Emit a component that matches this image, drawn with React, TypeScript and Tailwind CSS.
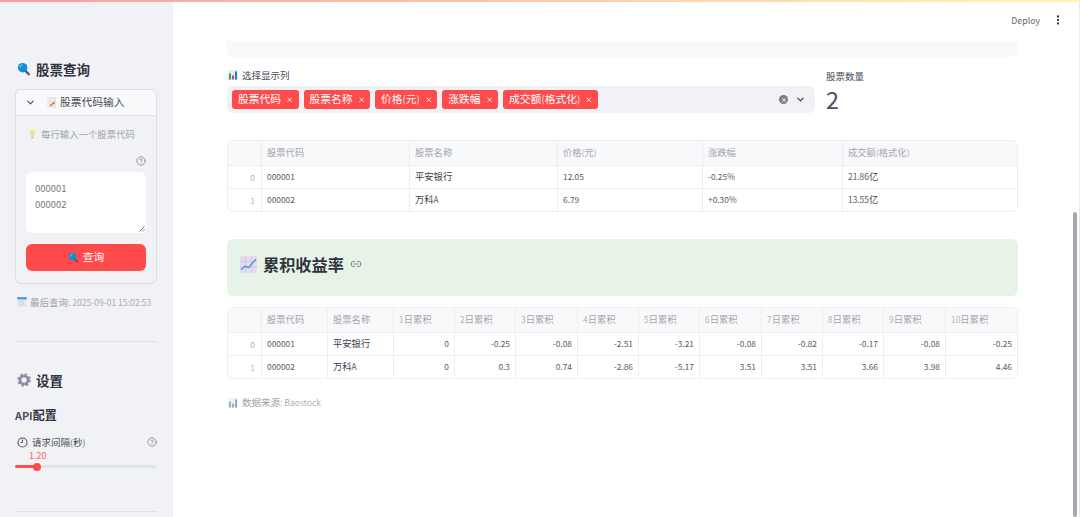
import { ChevronDown, CircleHelp, Ellipsis, Link2, X } from "lucide-react";

const font = "font-['Noto_Sans_CJK_SC','Noto_Sans',sans-serif]";

// latin runs sit a bit smaller than the CJK around them
function T({ children }: { children: string }) {
  return (
    <>
      {children.split(/([\x00-\x7F]+)/).map((part, i) =>
        i % 2 === 1 ? (
          <span key={i} className="whitespace-pre text-[0.9em] opacity-85">
            {part}
          </span>
        ) : (
          part
        )
      )}
    </>
  );
}

function Magnifier({ className }: { className: string }) {
  return (
    <svg viewBox="0 0 16 16" className={className}>
      <path d="M9.5 10l4 4" stroke="#5c4a8c" strokeWidth="2.6" strokeLinecap="round" />
      <circle cx="6.5" cy="6.5" r="5.4" fill="#0f8fd6" />
      <path d="M3.4 6a3.2 3.2 0 0 1 2.6-2.7" stroke="#7fd0f5" strokeWidth="1.2" fill="none" strokeLinecap="round" />
    </svg>
  );
}

function BarChart({ faded }: { faded?: boolean }) {
  return (
    <svg viewBox="0 0 10 10" className={`h-[10px] w-[10px] ${faded ? "opacity-60" : ""}`}>
      <rect width="10" height="10" rx="1" fill="#e6edf2" />
      <rect x="1" y="3.5" width="2" height="6" fill="#1fa971" />
      <rect x="4" y="5.5" width="2" height="4" fill="#e8318a" />
      <rect x="7" y="1.5" width="2" height="8" fill="#1f7fc4" />
    </svg>
  );
}

function Tag({ label }: { label: string }) {
  return (
    <span className="flex h-[19px] items-center gap-[5px] rounded-[3px] bg-[#ff4b4b] pl-[6px] pr-[5px] text-[10.75px] text-white">
      <span>
        <T>{label}</T>
      </span>
      <X className="h-[7.5px] w-[7.5px]" strokeWidth={2.8} />
    </span>
  );
}

type TableProps = {
  cols: string;
  headers: string[];
  rows: string[][];
  alignFrom: number;
};

function DataTable({ cols, headers, rows, alignFrom }: TableProps) {
  return (
    <div className="overflow-hidden rounded-[6px] border border-[#eceef2] text-[9.3px] text-[#3c3e4a]">
      <div className={`grid h-[24px] items-stretch bg-[#f8f9fb] text-[#a3a5ad] ${cols}`}>
        <div className="border-r border-[#eceef2]" />
        {headers.map((h) => (
          <div key={h} className="flex items-center border-r border-[#eceef2] pl-[5px] last:border-r-0">
            <span>
              <T>{h}</T>
            </span>
          </div>
        ))}
      </div>
      {rows.map((row, i) => (
        <div key={i} className={`grid h-[23px] border-t border-[#eceef2] ${cols}`}>
          <div className="flex items-center justify-end border-r border-[#eceef2] pr-[6px] text-[#a3a5ad]">
            <T>{String(i)}</T>
          </div>
          {row.map((cell, j) => (
            <div
              key={j}
              className={`flex items-center border-r border-[#eceef2] px-[5px] last:border-r-0 ${
                j >= alignFrom ? "justify-end" : ""
              }`}
            >
              <span>
                <T>{cell}</T>
              </span>
            </div>
          ))}
        </div>
      ))}
    </div>
  );
}

export default function App() {
  return (
    <div className={`flex h-[517px] w-[1080px] flex-col overflow-hidden bg-white ${font}`}>
      <div className="h-[2px] shrink-0 bg-gradient-to-r from-[#ff9a9a] to-[#fff6b8]" />
      <div className="flex min-h-0 flex-1">
        {/* Sidebar */}
        <aside className="w-[173px] shrink-0 overflow-hidden bg-[#f0f2f6] pl-[15px] pr-[16px] pt-[58px] text-[#31333f]">
          <div className="flex h-[18px] items-center gap-[5px] pl-[2px] text-[13.5px] font-semibold">
            <Magnifier className="h-[14px] w-[14px]" />
            股票查询
          </div>
          <div className="mt-[11px] h-[195px] rounded-[6px] border border-[#dcdee4]">
            <div className="flex h-[26px] items-center rounded-t-[6px] border-b border-[#dcdee4] bg-[#f8f9fb] pl-[9px] text-[10.75px] text-[#4a4c58]">
              <ChevronDown className="h-[11px] w-[11px]" strokeWidth={2.4} />
              <svg viewBox="0 0 10 12" className="ml-[11px] mr-[3px] h-[11px] w-[10px]">
                <rect width="8.5" height="11" x="0.5" y="0.5" fill="#eceaf0" stroke="#d8d5de" strokeWidth="0.5" />
                <path d="M2 9.5l5-4.5 1.5 1.5-5 3.5z" fill="#f0742b" />
              </svg>
              股票代码输入
            </div>
            <div className="px-[10px]">
              <div className="mt-[11px] flex h-[14px] items-center gap-[5px] pl-[3px] text-[9.4px] text-[#a0a2aa]">
                <svg viewBox="0 0 8 12" className="h-[9px] w-[7px]">
                  <path d="M4 0a3.6 3.6 0 0 0-2 6.6V8.4h4V6.6A3.6 3.6 0 0 0 4 0z" fill="#f8e08a" />
                  <rect x="2.4" y="9" width="3.2" height="2" fill="#b9bcc4" />
                </svg>
                每行输入一个股票代码
              </div>
              <div className="mt-[14px] flex h-[12px] items-center justify-end">
                <CircleHelp className="h-[10px] w-[10px] text-[#6f717a]" strokeWidth={1.6} />
              </div>
              <div className="relative mt-[5px] h-[61px] rounded-[6px] bg-white px-[9px] pt-[8px] text-[10.5px] leading-[15px] text-[#5c5e69]">
                <div>
                  <T>000001</T>
                </div>
                <div>
                  <T>000002</T>
                </div>
                <svg viewBox="0 0 6 6" className="absolute bottom-[1px] right-[1px] h-[6px] w-[6px]">
                  <path d="M0.5 5.5L5.5 0.5M3.2 5.5L5.5 3.2" stroke="#555" strokeWidth="0.8" />
                </svg>
              </div>
              <div className="mt-[11px] flex h-[27px] items-center justify-center gap-[4px] rounded-[6px] bg-[#ff4b4b] text-[10.75px] text-white">
                <Magnifier className="h-[11px] w-[11px]" />
                查询
              </div>
            </div>
          </div>
          <div className="mt-[12px] flex h-[12px] items-center gap-[3px] pl-[2px] text-[9.5px] text-[#a0a2aa]">
            <svg viewBox="0 0 10 10" className="h-[10px] w-[10px]">
              <rect width="10" height="10" rx="1" fill="#e6e9ee" />
              <rect width="10" height="2.6" rx="0.8" fill="#4fa6dc" />
              <path d="M2 4.5h6M2 6.2h6M2 8h6" stroke="#b4b8c2" strokeWidth="0.7" strokeDasharray="1 1" />
            </svg>
            <span>
              <T>最后查询: 2025-09-01 15:02:53</T>
            </span>
          </div>
          <div className="mt-[33px] h-px bg-[#dfe1e7]" />
          <div className="mt-[29px] flex h-[18px] items-center gap-[5px] pl-[2px] text-[13.5px] font-semibold">
            <svg viewBox="0 0 16 16" className="h-[14px] w-[14px]">
              <circle cx="8" cy="8" r="4.6" fill="none" stroke="#8d8a9c" strokeWidth="3" />
              <circle cx="8" cy="8" r="6.6" fill="none" stroke="#8d8a9c" strokeWidth="2.2" strokeDasharray="2.6 2.6" />
            </svg>
            设置
          </div>
          <div className="mt-[18px] h-[16px] text-[12px] font-semibold leading-[16px]">
            <T>API配置</T>
          </div>
          <div className="mt-[13px] flex h-[12px] items-center justify-between pl-[2px] text-[9.5px] text-[#4a4c58]">
            <span className="flex items-center gap-[4px]">
              <svg viewBox="0 0 12 12" className="h-[11px] w-[11px]">
                <circle cx="6" cy="6" r="5" fill="none" stroke="#555" strokeWidth="1.1" />
                <path d="M6 6V2.8M6 6H3.8" stroke="#555" strokeWidth="1.1" />
              </svg>
              <span>
                <T>请求间隔(秒)</T>
              </span>
            </span>
            <CircleHelp className="h-[10px] w-[10px] text-[#6f717a]" strokeWidth={1.6} />
          </div>
          <div className="mt-[1px] h-[11px] pl-[14px] text-[10px] leading-[11px] text-[#ff4b4b]">
            <T>1.20</T>
          </div>
          <div className="relative mt-[5px] h-[3px] rounded-full bg-[#dfe3ea]">
            <div className="h-[3px] w-[22px] rounded-full bg-[#ff4b4b]" />
            <div className="absolute left-[18px] top-[-2.5px] h-[8px] w-[8px] rounded-full bg-[#ff4b4b]" />
          </div>
          <div className="mt-[43px] h-px bg-[#dfe1e7]" />
        </aside>

        {/* Main */}
        <main className="relative min-w-0 flex-1 border-r border-[#ececf0] pl-[54px] pr-[61px] text-[#31333f]">
          <div className="absolute right-[15px] top-[11px] flex h-[14px] items-center gap-[12px] text-[9.75px] text-[#4a4c58]">
            <span>
              <T>Deploy</T>
            </span>
            <Ellipsis className="h-[12px] w-[12px] rotate-90 text-[#31333f]" strokeWidth={2.6} />
          </div>
          <div className="absolute right-[2px] top-[210px] h-[305px] w-[4px] rounded-full bg-[#a8a8ae]" />

          <div className="mt-[39px] h-[16px] rounded-b-[6px] bg-[#f8f9fb]" />
          <div className="mt-[12px] flex gap-[11px]">
            <div className="flex-1">
              <div className="flex h-[12px] items-center gap-[4px] pl-[1px] text-[9.5px] text-[#4a4c58]">
                <BarChart />
                选择显示列
              </div>
              <div className="mt-[5px] flex h-[27px] items-center rounded-[6px] bg-[#f0f2f6] pl-[5px] pr-[9px]">
                <div className="flex flex-1 gap-[5px]">
                  <Tag label="股票代码" />
                  <Tag label="股票名称" />
                  <Tag label="价格(元)" />
                  <Tag label="涨跌幅" />
                  <Tag label="成交额(格式化)" />
                </div>
                <span className="flex h-[9px] w-[9px] items-center justify-center rounded-full bg-[#7d7f8a] text-white">
                  <X className="h-[6px] w-[6px]" strokeWidth={3.4} />
                </span>
                <ChevronDown className="ml-[7px] h-[11px] w-[11px] text-[#31333f]" strokeWidth={2.4} />
              </div>
            </div>
            <div className="w-[192px] pt-[1px]">
              <div className="h-[12px] text-[9.5px] leading-[12px] text-[#4a4c58]">股票数量</div>
              <div className="text-[26px] leading-[32px]">
                <T>2</T>
              </div>
            </div>
          </div>

          <div className="mt-[25px]">
            <DataTable
              cols="grid-cols-[34px_148px_148px_145px_140px_1fr]"
              headers={["股票代码", "股票名称", "价格(元)", "涨跌幅", "成交额(格式化)"]}
              alignFrom={99}
              rows={[
                ["000001", "平安银行", "12.05", "-0.25%", "21.86亿"],
                ["000002", "万科A", "6.79", "+0.30%", "13.55亿"],
              ]}
            />
          </div>

          <div className="mt-[27px] flex h-[57px] items-center gap-[6px] rounded-[6px] bg-[#e8f3e8] pb-[7px] pl-[13px]">
            <svg viewBox="0 0 16 16" className="h-[17px] w-[17px]">
              <rect width="16" height="16" rx="1.5" fill="#e6dcef" />
              <path d="M5.3 0v16M10.6 0v16M0 5.3h16M0 10.6h16" stroke="#c8b8d8" strokeWidth="0.6" />
              <path d="M1 13l4-3.6 3 1.6L15 3" stroke="#3d9be0" strokeWidth="1.3" fill="none" />
            </svg>
            <span className="text-[16.2px] font-bold">累积收益率</span>
            <Link2 className="h-[12px] w-[12px] text-[#6f717a]" strokeWidth={1.8} />
          </div>

          <div className="mt-[11px]">
            <DataTable
              cols="grid-cols-[34px_66px_66px_61px_61px_62px_61px_61px_62px_61px_61px_62px_1fr]"
              headers={["股票代码", "股票名称", "1日累积", "2日累积", "3日累积", "4日累积", "5日累积", "6日累积", "7日累积", "8日累积", "9日累积", "10日累积"]}
              alignFrom={2}
              rows={[
                ["000001", "平安银行", "0", "-0.25", "-0.08", "-2.51", "-3.21", "-0.08", "-0.82", "-0.17", "-0.08", "-0.25"],
                ["000002", "万科A", "0", "0.3", "0.74", "-2.86", "-5.17", "3.51", "3.51", "3.66", "3.98", "4.46"],
              ]}
            />
          </div>

          <div className="mt-[17px] flex h-[13px] items-center gap-[4px] pl-[1px] text-[9.5px] text-[#a0a2aa]">
            <BarChart faded />
            <span>
              <T>数据来源: Baostock</T>
            </span>
          </div>
        </main>
      </div>
    </div>
  );
}
